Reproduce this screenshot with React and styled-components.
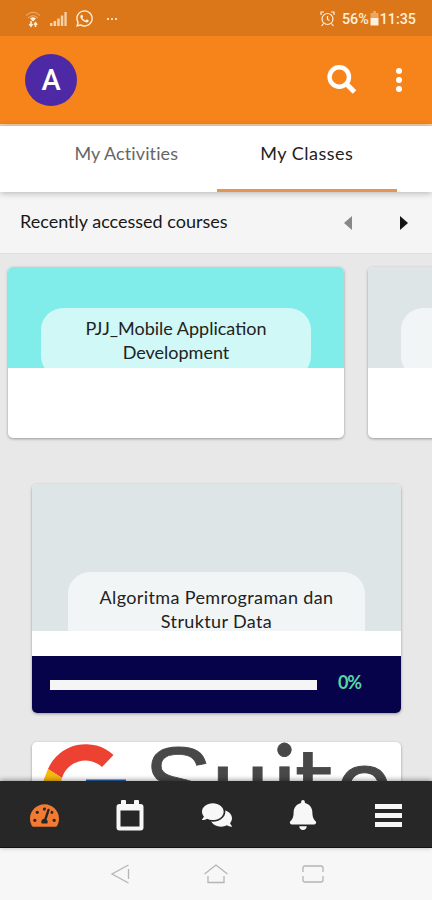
import React from 'react';
import styled, { createGlobalStyle } from 'styled-components';
import { FaTachometerAlt, FaComments, FaBell, FaWhatsapp } from 'react-icons/fa';

const courses = [
  { title: ['PJJ_Mobile Application', 'Development'], color: '#80edea' },
  { title: [], color: '#dde5e7' },
];

const App = () => (
  <>
    <GlobalStyle />
    <Screen>
      <StatusBar>
        <StatusGroup>
          <WifiIcon />
          <SignalIcon />
          <FaWhatsapp size={19} />
          <MoreDots>
            <i />
            <i />
            <i />
          </MoreDots>
        </StatusGroup>
        <StatusRight>
          <AlarmIcon />
          <StatusText>56%</StatusText>
          <BatteryIcon />
          <StatusText>11:35</StatusText>
        </StatusRight>
      </StatusBar>

      <Header>
        <Avatar>A</Avatar>
        <HeaderActions>
          <SearchIcon />
          <MenuDots>
            <i />
            <i />
            <i />
          </MenuDots>
        </HeaderActions>
      </Header>

      <Tabs>
        <Tab>My Activities</Tab>
        <Tab $active>My Classes</Tab>
      </Tabs>

      <SectionBar>
        <SectionTitle>Recently accessed courses</SectionTitle>
        <Arrows>
          <Arrow $left viewBox="0 0 8 14">
            <path d="M8 0 0 7l8 7z" />
          </Arrow>
          <Arrow viewBox="0 0 8 14">
            <path d="M0 0l8 7-8 7z" />
          </Arrow>
        </Arrows>
      </SectionBar>

      <Content>
        <Carousel>
          {courses.map((course) => (
            <SmallCard key={course.color}>
              <SmallCover $color={course.color}>
                <SmallLabel>
                  {course.title.map((line) => (
                    <span key={line}>{line}</span>
                  ))}
                </SmallLabel>
              </SmallCover>
            </SmallCard>
          ))}
        </Carousel>

        <CourseCard>
          <CourseCover>
            <CourseLabel>
              <span>Algoritma Pemrograman dan</span>
              <span>Struktur Data</span>
            </CourseLabel>
          </CourseCover>
          <ProgressPanel>
            <ProgressTrack />
            <ProgressValue>0%</ProgressValue>
          </ProgressPanel>
        </CourseCard>

        <SuiteCard>
          <SuiteLogo />
        </SuiteCard>
      </Content>

      <BottomNav>
        <NavItem $active>
          <FaTachometerAlt size={29} />
        </NavItem>
        <NavItem>
          <CalendarIcon />
        </NavItem>
        <NavItem>
          <FaComments size={30} />
        </NavItem>
        <NavItem>
          <FaBell size={30} />
        </NavItem>
        <NavItem>
          <BarsIcon>
            <i />
            <i />
            <i />
          </BarsIcon>
        </NavItem>
      </BottomNav>

      <SystemNav>
        <svg width="20" height="22" viewBox="0 0 20 22">
          <path d="M18.500 2 2 11l16.500 9M18.500 6v10" />
        </svg>
        <svg width="26" height="22" viewBox="0 0 26 22">
          <path d="M1.500 11 13 2l11.500 9M5 13v6.500h16V13" />
        </svg>
        <svg width="24" height="20" viewBox="0 0 24 20">
          <path d="M2 8V4q0-2 2-2h16q2 0 2 2v4M2 12v4q0 2 2 2h16q2 0 2-2v-4" />
        </svg>
      </SystemNav>
    </Screen>
  </>
);

const WifiIcon = () => (
  <svg width="16" height="18" viewBox="0 0 16 18" fill="none" stroke="currentColor">
    <path d="M1 5.500Q8-1 15 5.500M3 8q5-4.500 10 0" strokeWidth="1" opacity=".5" />
    <path d="M5 8.500q3-2.500 6 0L8 11.500z" fill="currentColor" stroke="none" />
    <path d="M6 11v5M4.300 14 6 16.200 7.500 14M10.500 17v-4M9 14.700l1.500-2 1.700 2" strokeWidth="1.500" />
  </svg>
);

const SignalIcon = () => (
  <svg width="17" height="14" viewBox="0 0 17 14" fill="currentColor" opacity=".75">
    <path d="M0 11h2.500v3H0zM3.600 9h2.500v5H3.600zM7.200 6.500h2.500V14H7.200zM10.800 3.500h2.500V14h-2.500zM14.400 0h2.300v14h-2.300z" />
  </svg>
);

const AlarmIcon = () => (
  <svg width="15" height="16" viewBox="0 0 15 16" fill="none" stroke="currentColor" strokeWidth="1.200">
    <circle cx="7.500" cy="8" r="5.500" />
    <path d="M7.500 5v3.500l2 1M1 4V1h3M14 4V1h-3M3.500 12.500 1.500 15M11.500 12.500l2 2.500" />
  </svg>
);

const BatteryIcon = () => (
  <svg width="9" height="15" viewBox="0 0 9 15">
    <path d="M3 0h3v2H3zM.500 2h8v5h-8z" fill="currentColor" opacity=".4" />
    <path d="M.500 7h8v7.500h-8z" fill="currentColor" />
  </svg>
);

const SearchIcon = () => (
  <svg width="30" height="30" viewBox="0 0 30 30" fill="none" stroke="currentColor">
    <circle cx="12.300" cy="12" r="9.700" strokeWidth="4.400" />
    <path d="m19.500 19 8 8" strokeWidth="5" />
  </svg>
);

const CalendarIcon = () => (
  <svg width="28" height="31" viewBox="0 0 28 31" fill="currentColor">
    <path
      fillRule="evenodd"
      d="M6 0h3q1 0 1 1v3h8V1q0-1 1-1h3q1 0 1 1v3h1.500q3 0 3 3v20.500q0 3-3 3h-21q-3 0-3-3V7q0-3 3-3H5V1q0-1 1-1zM4.500 10.500v16h19v-16z"
    />
  </svg>
);

const SuiteLogo = () => (
  <svg width="369" height="39" viewBox="0 0 369 39">
    <path d="M16 27A41 41 0 0 1 81.500 13L70 25A24.500 24.500 0 0 0 30 36z" fill="#ed4132" />
    <path d="M16 27 30 36 28.500 41H10.500z" fill="#f7b90a" />
    <path d="M54 37.500h40v5H54z" fill="#2460ae" />
    <SuiteText>
      <Glyph x="146" y="78" $size={103}>S</Glyph>
      <Glyph x="208.500" y="80" $size={104}>u</Glyph>
      <Glyph x="252.500" y="78.500" $size={106} $font="Lato">i</Glyph>
      <Glyph x="281.500" y="78" $size={97} $font="DejaVu Sans">t</Glyph>
      <Glyph x="332.500" y="80" $size={104}>e</Glyph>
    </SuiteText>
  </svg>
);

const GlobalStyle = createGlobalStyle`
  * {
    box-sizing: border-box;
  }

  body {
    margin: 0;
    font-family: Lato, 'Open Sans', sans-serif;
    color: #222;
  }
`;

const Screen = styled.div`
  width: 432px;
  height: 900px;
  display: flex;
  flex-direction: column;
  overflow: hidden;
  background: #e8e8e8;
`;

const StatusBar = styled.div`
  flex: none;
  height: 36px;
  padding: 1px 16px 0 25px;
  display: flex;
  align-items: center;
  justify-content: space-between;
  background: #db7619;
  color: #fff0dc;
`;

const StatusGroup = styled.div`
  display: flex;
  align-items: center;
  gap: 8.500px;
`;

const StatusRight = styled.div`
  display: flex;
  align-items: center;
  gap: 1px;

  svg:first-child {
    margin-right: 6px;
  }
`;

const StatusText = styled.span`
  font-family: Roboto, sans-serif;
  font-size: 14.300px;
  font-weight: 500;
  line-height: 18px;
  padding-top: 1px;
`;

const MoreDots = styled.span`
  display: flex;
  gap: 2px;
  margin-left: 4px;

  i {
    width: 2px;
    height: 2px;
    background: currentColor;
    opacity: 0.8;
  }
`;

const Header = styled.header`
  flex: none;
  height: 90px;
  padding: 0 30px 1px 25px;
  display: flex;
  align-items: center;
  justify-content: space-between;
  background: #f7841b;
  border-bottom: 2px solid #f6cfb0;
  color: #fff;
`;

const Avatar = styled.div`
  width: 52px;
  height: 52px;
  border-radius: 50%;
  display: flex;
  align-items: center;
  justify-content: center;
  padding-top: 1px;
  background: #4e29a5;
  font-family: Roboto, sans-serif;
  font-size: 29px;
  font-weight: 500;
`;

const HeaderActions = styled.div`
  display: flex;
  align-items: center;
  gap: 39px;
`;

const MenuDots = styled.div`
  display: flex;
  flex-direction: column;
  gap: 3px;

  i {
    width: 6px;
    height: 6px;
    border-radius: 50%;
    background: currentColor;
  }
`;

const Tabs = styled.nav`
  flex: none;
  height: 66px;
  padding: 0 35px 0 36px;
  display: flex;
  background: #fff;
  box-shadow: 0 1px 7px rgba(0, 0, 0, 0.28);
  z-index: 1;
`;

const Tab = styled.div`
  flex: 1;
  padding-top: 15px;
  border-bottom: 3px solid ${({ $active }) => ($active ? '#e39551' : 'transparent')};
  color: ${({ $active }) => ($active ? '#222' : '#666')};
  font-size: 18px;
  line-height: 24px;
  letter-spacing: ${({ $active }) => ($active ? '0.5px' : '0.1px')};
  text-align: center;
  white-space: nowrap;
`;

const SectionBar = styled.div`
  flex: none;
  height: 62px;
  padding: 0 24px 0 20px;
  display: flex;
  align-items: center;
  justify-content: space-between;
  background: #f5f5f5;
  border-bottom: 1px solid #ddd;
`;

const SectionTitle = styled.h2`
  margin: 0 0 3px;
  font-size: 18px;
  font-weight: 400;
  line-height: 24px;
  color: #181818;
`;

const Arrows = styled.div`
  display: flex;
  gap: 48px;
`;

const Arrow = styled.svg`
  width: 8px;
  height: 14px;
  fill: ${({ $left }) => ($left ? '#888' : '#151515')};
`;

const Content = styled.main`
  flex: 1;
  min-height: 0;
  overflow: hidden;
  padding-top: 13px;
`;

const Card = styled.article`
  overflow: hidden;
  border-radius: 5px;
  background: #fff;
  box-shadow: 0 1px 3px rgba(0, 0, 0, 0.35);
`;

const Carousel = styled.div`
  display: flex;
  gap: 24px;
  margin-left: 8px;
`;

const SmallCard = styled(Card)`
  flex: none;
  width: 336px;
  height: 171px;
`;

const SmallCover = styled.div`
  height: 101px;
  padding: 41px 33px 0;
  overflow: hidden;
  background: ${({ $color }) => $color};
`;

const Label = styled.div`
  display: flex;
  flex-direction: column;
  align-items: center;
  background: rgba(255, 255, 255, 0.62);
  font-size: 18px;
  line-height: 24px;
  white-space: nowrap;
`;

const SmallLabel = styled(Label)`
  width: 270px;
  height: 70px;
  padding-top: 8px;
  border-radius: 22px;
`;

const CourseCard = styled(Card)`
  width: 369px;
  height: 229px;
  margin: 46px 0 0 32px;
`;

const CourseCover = styled.div`
  height: 147px;
  padding: 88px 36px 0;
  overflow: hidden;
  background: #dde5e7;
`;

const CourseLabel = styled(Label)`
  width: 297px;
  height: 90px;
  padding-top: 13px;
  border-radius: 22px;
  letter-spacing: 0.370px;
`;

const ProgressPanel = styled.div`
  height: 57px;
  margin-top: 25px;
  padding: 0 18px;
  display: flex;
  align-items: center;
  gap: 21px;
  background: #06034a;
`;

const ProgressTrack = styled.div`
  width: 267px;
  height: 10px;
  background: #f5f5f5;
`;

const ProgressValue = styled.span`
  padding-bottom: 5px;
  color: #58d6a4;
  font-size: 18px;
  font-weight: 700;
  line-height: 20px;
  letter-spacing: -1.200px;
`;

const SuiteCard = styled(Card)`
  width: 369px;
  height: 120px;
  margin: 29px 0 0 32px;

  svg {
    display: block;
  }
`;

const SuiteText = styled.text`
  fill: #484848;
  stroke: #484848;
  stroke-width: 0.800px;
  text-anchor: middle;
`;

const Glyph = styled.tspan`
  font-family: '${({ $font = 'Liberation Sans' }) => $font}', sans-serif;
  font-size: ${({ $size }) => $size}px;
`;

const BottomNav = styled.nav`
  flex: none;
  height: 67px;
  padding-left: 1px;
  display: flex;
  background: #272727;
  border-bottom: 1px solid #111;
  box-shadow: 0 -1px 5px rgba(0, 0, 0, 0.4);
  z-index: 1;
`;

const NavItem = styled.div`
  flex: 1;
  display: flex;
  align-items: center;
  justify-content: center;
  padding-top: 2px;
  color: ${({ $active }) => ($active ? '#f27a32' : '#f7f7f7')};
`;

const BarsIcon = styled.span`
  display: flex;
  flex-direction: column;
  gap: 4px;

  i {
    width: 27px;
    height: 5px;
    background: currentColor;
  }
`;

const SystemNav = styled.div`
  flex: none;
  height: 52px;
  padding: 0 107px 0 110px;
  display: flex;
  align-items: center;
  justify-content: space-between;
  background: #f7f7f7;

  svg {
    fill: none;
    stroke: #b5b5b5;
    stroke-width: 1.300;
  }
`;

export default App;
